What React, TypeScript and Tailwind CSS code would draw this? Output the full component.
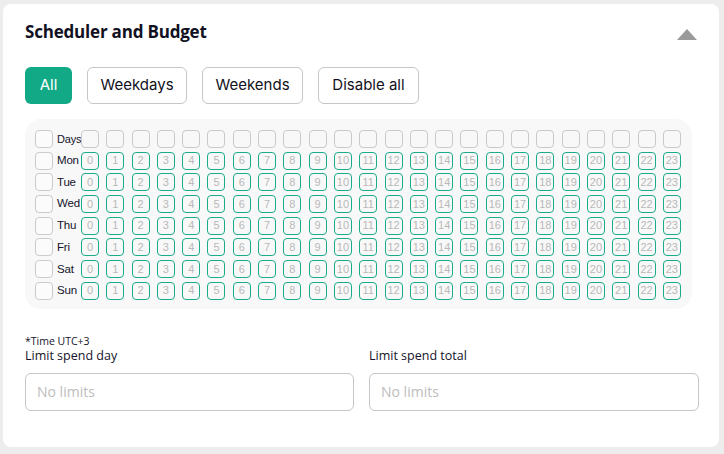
import React from 'react';

const DAYS = ['Mon', 'Tue', 'Wed', 'Thu', 'Fri', 'Sat', 'Sun'];
const HOURS = Array.from({ length: 24 }, (_, i) => i);

function Box({ children, active }: { children?: React.ReactNode; active?: boolean }) {
  return (
    <div
      className={`w-[18px] h-[18px] shrink-0 rounded-[4px] border-[1.5px] flex items-center justify-center text-[11px] leading-none text-[#b9b9b9] ${
        active ? 'border-[#1aab8b]' : 'border-[#c9c9c9]'
      }`}
    >
      {children}
    </div>
  );
}

function Row({ label, hours }: { label: string; hours: boolean }) {
  return (
    <div className="flex items-center h-[18px]">
      <div className="w-[18px] h-[18px] shrink-0 rounded-[4px] border-[1.5px] border-[#cbcbcb] bg-white/40" />
      <div className={`w-[28px] pl-[4px] shrink-0 text-[#14142b] tracking-[-0.2px] ${label === 'Days' ? 'text-[11px]' : 'text-[11.5px]'}`}>
        {label}
      </div>
      <div className="flex gap-[7.3px]">
        {HOURS.map((h) => (
          <Box key={h} active={hours}>
            {hours ? h : null}
          </Box>
        ))}
      </div>
    </div>
  );
}

export default function App() {
  return (
    <div className="w-[724px] h-[454px] bg-[#ededed] pt-[4px] pl-[3px]" style={{ fontFamily: '"Open Sans", "Noto Sans", sans-serif' }}>
      <div className="w-[716px] h-[443px] bg-white rounded-[8px] pl-[22px] pr-[18px] pt-[16px]">
        {/* Header */}
        <div className="flex items-center justify-between h-[24px]">
          <h2 className="text-[17px] font-bold text-[#111122] tracking-[-0.2px]">Scheduler and Budget</h2>
          <svg width="20" height="12" viewBox="0 0 20 12" className="mr-[4px] mt-[5px]">
            <path d="M10 0 L20 11 L0 11 Z" fill="#9a9a9a" />
          </svg>
        </div>

        {/* Presets */}
        <div className="flex gap-[15px] mt-[23px]" style={{ fontFamily: 'Inter, sans-serif' }}>
          <button className="h-[37px] w-[47px] rounded-[6px] bg-[#12a987] text-white text-[15px]">All</button>
          <button className="h-[37px] w-[100px] rounded-[6px] border border-[#c6c6c6] text-[15px] text-[#111122]">Weekdays</button>
          <button className="h-[37px] w-[101px] rounded-[6px] border border-[#c6c6c6] text-[15px] text-[#111122]">Weekends</button>
          <button className="h-[37px] w-[101px] rounded-[6px] border border-[#c6c6c6] text-[15px] text-[#111122]">Disable all</button>
        </div>

        {/* Hours grid */}
        <div
          className="mt-[15px] w-[667px] rounded-[16px] bg-[#f8f8f8] pl-[10px] pt-[11px] pb-[9px] flex flex-col gap-[3.7px]"
          style={{ fontFamily: '"Liberation Sans", sans-serif' }}
        >
          <Row label="Days" hours={false} />
          {DAYS.map((d) => (
            <Row key={d} label={d} hours />
          ))}
        </div>

        {/* Budget */}
        <div className="mt-[26px] text-[10.5px] leading-[13px] text-[#14142b]">*Time UTC+3</div>
        <div className="flex gap-[15px]">
          <div className="flex flex-col w-[329px] shrink-0">
            <label className="text-[12.5px] leading-[16px] text-[#14142b]">Limit spend day</label>
            <div className="mt-[9px] h-[38px] rounded-[6px] border border-[#c6c6c6] flex items-center px-[11px] text-[14px] text-[#bdbdbd]">
              No limits
            </div>
          </div>
          <div className="flex flex-col w-[330px] shrink-0">
            <label className="text-[12.5px] leading-[16px] text-[#14142b]">Limit spend total</label>
            <div className="mt-[9px] h-[38px] rounded-[6px] border border-[#c6c6c6] flex items-center px-[11px] text-[14px] text-[#bdbdbd]">
              No limits
            </div>
          </div>
        </div>
      </div>
    </div>
  );
}
